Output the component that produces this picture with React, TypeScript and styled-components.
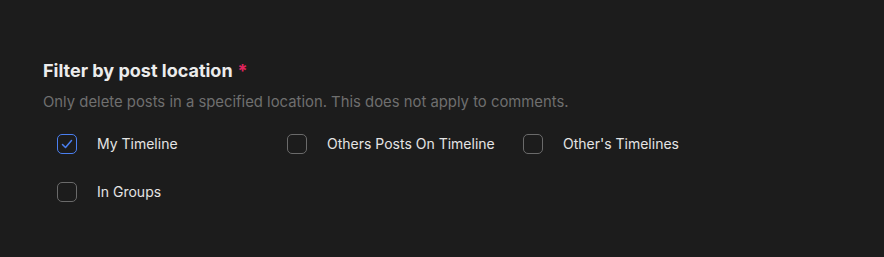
import React, { useState } from "react";
import styled, { createGlobalStyle } from "styled-components";

const Global = createGlobalStyle`
  html, body { margin: 0; padding: 0; background: #1c1c1c; }
  body { font-family: Inter, "Noto Sans", sans-serif; -webkit-font-smoothing: antialiased; }
`;

const Page = styled.div`
  width: 884px;
  height: 257px;
  box-sizing: border-box;
  padding: 60px 43px 0;
  background: #1c1c1c;
`;

const Title = styled.h2`
  margin: 0;
  font-size: 18px;
  line-height: 22px;
  font-weight: 700;
  color: #ececec;
`;

const Required = styled.span`
  color: #e0245e;
  margin-left: 5px;
`;

const Description = styled.p`
  margin: 10px 0 0;
  font-size: 14.85px;
  line-height: 20px;
  color: #6f6f6f;
`;

const Options = styled.div`
  display: grid;
  grid-template-columns: 230px 236px auto;
  row-gap: 28px;
  margin-top: 22px;
  padding-left: 14px;
`;

const Option = styled.label`
  display: flex;
  align-items: center;
  gap: 20px;
  cursor: pointer;
  font-size: 14px;
  line-height: 20px;
  color: #e4e4e4;
`;

const Box = styled.span<{ $checked: boolean }>`
  width: 20px;
  height: 20px;
  box-sizing: border-box;
  border-radius: 5px;
  border: 1.5px solid ${(p) => (p.$checked ? "#4a7ff0" : "#6a6a6a")};
  display: flex;
  align-items: center;
  justify-content: center;
  flex-shrink: 0;
`;

const items = ["My Timeline", "Others Posts On Timeline", "Other's Timelines", "In Groups"];

export default function App() {
  const [checked, setChecked] = useState<Record<string, boolean>>({ "My Timeline": true });
  return (
    <>
      <Global />
      <Page>
        <Title>
          Filter by post location<Required>*</Required>
        </Title>
        <Description>Only delete posts in a specified location. This does not apply to comments.</Description>
        <Options>
          {items.map((it) => (
            <Option key={it} onClick={() => setChecked((c) => ({ ...c, [it]: !c[it] }))}>
              <Box $checked={!!checked[it]}>
                {checked[it] && (
                  <svg width="12" height="12" viewBox="0 0 12 12" fill="none">
                    <path d="M1.5 6.5 L4.5 9.5 L10.5 2.5" stroke="#4a7ff0" strokeWidth="1.5" strokeLinecap="round" strokeLinejoin="round" />
                  </svg>
                )}
              </Box>
              {it}
            </Option>
          ))}
        </Options>
      </Page>
    </>
  );
}
